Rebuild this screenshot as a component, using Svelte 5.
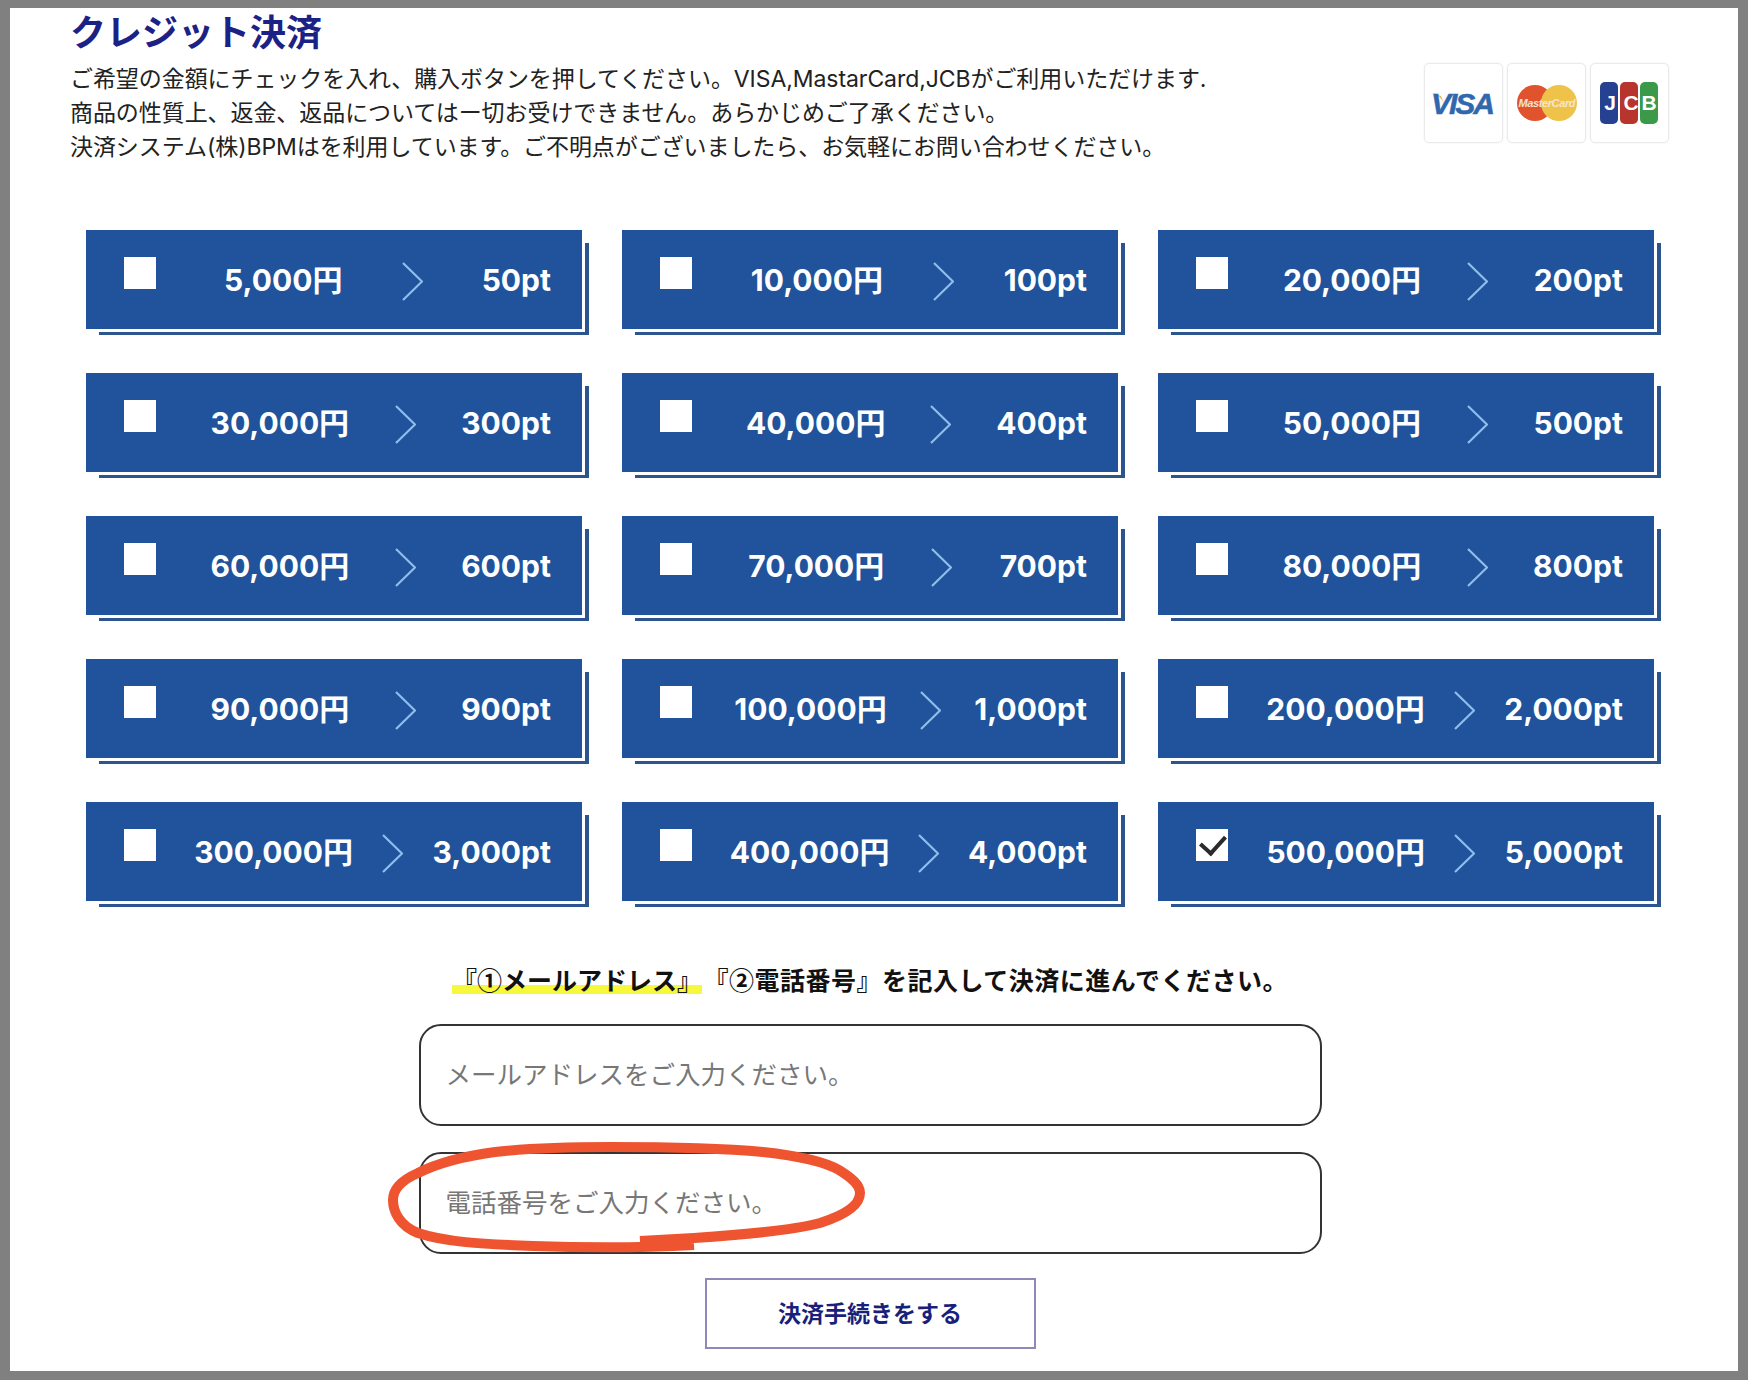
<script>
  const amounts = [5000, 10000, 20000, 30000, 40000, 50000, 60000, 70000, 80000, 90000, 100000, 200000, 300000, 400000, 500000];
  const fmt = (n) => n.toLocaleString('en-US');

  let selected = $state(500000);
  let email = $state('');
  let tel = $state('');
</script>

<div class="frame">
  <main class="sheet">
    <header class="head">
      <div class="intro">
        <h1>クレジット決済</h1>
        <p>ご希望の金額にチェックを入れ、購入ボタンを押してください。VISA,MastarCard,JCBがご利用いただけます.</p>
        <p>商品の性質上、返金、返品についてはー切お受けできません。あらかじめご了承ください。</p>
        <p>決済システム(株)BPMはを利用しています。ご不明点がございましたら、お気軽にお問い合わせください。</p>
      </div>
      <div class="cards">
        <div class="card">
          <svg viewBox="0 0 79 80" width="79" height="80">
            <path d="M7 30 Q16 30 21 43 L17 33 Z" fill="#eeb544" />
            <text x="39" y="51" text-anchor="middle" textLength="64" class="visa">VISA</text>
          </svg>
        </div>
        <div class="card">
          <svg viewBox="0 0 79 80" width="79" height="80">
            <circle cx="28" cy="40" r="18" fill="#e0532c" />
            <circle cx="52" cy="40" r="18" fill="#efc24a" />
            <text x="40" y="44" text-anchor="middle" textLength="57" class="mc">MasterCard</text>
          </svg>
        </div>
        <div class="card">
          <svg viewBox="0 0 79 80" width="79" height="80">
            <rect x="10" y="19" width="18" height="42" rx="5" fill="#26418f" />
            <rect x="30" y="19" width="18" height="42" rx="5" fill="#b7352c" />
            <rect x="50" y="19" width="18" height="42" rx="5" fill="#3a9a4a" />
            <text x="20" y="47" text-anchor="middle" class="jcb">J</text>
            <text x="41" y="47" text-anchor="middle" class="jcb">C</text>
            <text x="59" y="47" text-anchor="middle" class="jcb">B</text>
          </svg>
        </div>
      </div>
    </header>

    <div class="plans">
      {#each amounts as yen}
        <label class="plan">
          <input type="checkbox" checked={selected === yen} onchange={() => (selected = yen)} />
          <span class="yen">{fmt(yen)}円</span>
          <svg class="arrow" viewBox="0 0 21 39" width="21" height="39">
            <polyline points="1,1 20,19.5 1,38" fill="none" stroke="#8fbdec" stroke-width="2.2" />
          </svg>
          <span class="pt">{fmt(yen / 100)}pt</span>
        </label>
      {/each}
    </div>

    <form class="entry" onsubmit={(e) => e.preventDefault()}>
      <p class="lead"><span class="mark">『①メールアドレス』</span><span class="rest">『②電話番号』を記入して決済に進んでください。</span></p>
      <input class="field" type="email" placeholder="メールアドレスをご入力ください。" bind:value={email} />
      <input class="field" type="tel" placeholder="電話番号をご入力ください。" bind:value={tel} />
      <button class="submit" type="submit">決済手続きをする</button>
    </form>

    <!-- hand-drawn annotation on top of the phone field -->
    <svg class="scribble" viewBox="0 0 1748 1380" width="1748" height="1380">
      <path
        d="M694 1245 C640 1248 590 1248 533 1246 C480 1244 445 1242 418 1233 C400 1226 393 1212 393 1200 C393 1188 402 1180 418 1173 C440 1162 465 1156 495 1152 C530 1148 570 1147 610 1147 C670 1147 720 1148 763 1152 C800 1156 825 1162 839 1170 C852 1178 860 1185 860 1193 C860 1205 845 1215 820 1223 C790 1231 740 1235 694 1238 L640 1241"
        fill="none"
        stroke="#ee5430"
        stroke-width="10"
      />
    </svg>
  </main>
</div>

<style>
  :global(body) {
    margin: 0;
    background: #808080;
  }
  .frame {
    box-sizing: border-box;
    width: 1748px;
    height: 1380px;
    padding: 8px 10px 9px;
    background: #808080;
    font-family: Inter, "Noto Sans CJK JP", "Noto Sans", sans-serif;
  }
  .sheet {
    box-sizing: border-box;
    height: 100%;
    padding-left: 60px;
    padding-right: 69px;
    background: #fff;
  }
  .head {
    display: flex;
    justify-content: space-between;
    align-items: flex-start;
    height: 222px;
  }
  h1 {
    margin: 4px 0 0;
    font-size: 36px;
    line-height: 42px;
    font-weight: 700;
    color: #1c2186;
  }
  .intro p {
    margin: 0;
    font-size: 23px;
    line-height: 34px;
    letter-spacing: -0.07px;
    color: #222;
  }
  .intro h1 + p {
    margin-top: 8px;
  }
  .cards {
    display: flex;
    gap: 4px;
    margin-top: 55px;
  }
  .card {
    width: 79px;
    height: 80px;
    border: 1px solid #eaeaea;
    border-radius: 5px;
    box-sizing: border-box;
    box-shadow: 0 0 2px rgba(0, 0, 0, 0.08);
    overflow: hidden;
  }
  .card svg {
    display: block;
    margin: -1px;
  }
  .visa {
    font: italic 700 30px "Liberation Sans", sans-serif;
    fill: #2f68ad;
    stroke: #2f68ad;
    stroke-width: 0.5;
  }
  .mc {
    font: italic 700 11px "Liberation Sans", sans-serif;
    fill: #f6e4d2;
  }
  .jcb {
    font: 700 21px "Liberation Sans", sans-serif;
    fill: #fff;
  }
  .plans {
    display: grid;
    grid-template-columns: repeat(3, 496px);
    grid-auto-rows: 99px;
    gap: 44px 40px;
    margin-left: 16px;
  }
  .plan {
    position: relative;
    display: flex;
    align-items: center;
    padding: 0 31px 0 38px;
    background: #20539b;
    color: #fff;
    font-size: 30px;
    line-height: 40px;
    font-weight: 700;
    cursor: pointer;
  }
  .plan::after {
    content: "";
    position: absolute;
    top: 13px;
    left: 13px;
    right: -7px;
    bottom: -6px;
    border-right: 4px solid #2c5590;
    border-bottom: 3px solid #2c5590;
    pointer-events: none;
  }
  .plan input {
    appearance: none;
    position: relative;
    flex: none;
    align-self: flex-start;
    width: 32px;
    height: 32px;
    margin: 27px 9px 0 0;
    background: #fff;
    border-radius: 0;
    cursor: pointer;
  }
  .plan input:checked::after {
    content: "";
    position: absolute;
    left: 9px;
    top: 1px;
    width: 12px;
    height: 20px;
    border-right: 4px solid #2b2b2b;
    border-bottom: 4px solid #2b2b2b;
    transform: rotate(42deg);
  }
  .yen, .arrow, .pt {
    margin-left: auto;
    white-space: nowrap;
  }
  .arrow {
    flex: none;
    margin-top: 3px;
  }
  .entry {
    display: flex;
    flex-direction: column;
    align-items: center;
    width: 1568px;
    margin-left: 16px;
  }
  .lead {
    margin: 59px 0 26px;
    font-family: "Noto Sans CJK JP", sans-serif;
    font-size: 25px;
    line-height: 38px;
    font-weight: 700;
    color: #111;
    white-space: nowrap;
  }
  .mark {
    background: linear-gradient(transparent 68%, #f7f73c 68%, #f7f73c 92%, transparent 92%);
  }
  .rest {
    margin-left: 14px;
    letter-spacing: 0.5px;
  }
  .field {
    box-sizing: border-box;
    width: 903px;
    height: 102px;
    margin-bottom: 26px;
    padding: 0 25px 2px;
    border: 2px solid #333;
    border-radius: 22px;
    background: #fff;
    font: inherit;
    font-size: 25.5px;
    color: #222;
    outline: none;
  }
  .field::placeholder {
    color: #777;
  }
  .submit {
    box-sizing: border-box;
    width: 331px;
    height: 71px;
    margin-top: -2px;
    padding-bottom: 4px;
    border: 2px solid #8d8ab8;
    background: #fff;
    font: inherit;
    font-size: 23px;
    font-weight: 700;
    color: #1a1f7a;
    cursor: pointer;
  }
  .scribble {
    position: absolute;
    top: 0;
    left: 0;
    pointer-events: none;
  }
</style>
